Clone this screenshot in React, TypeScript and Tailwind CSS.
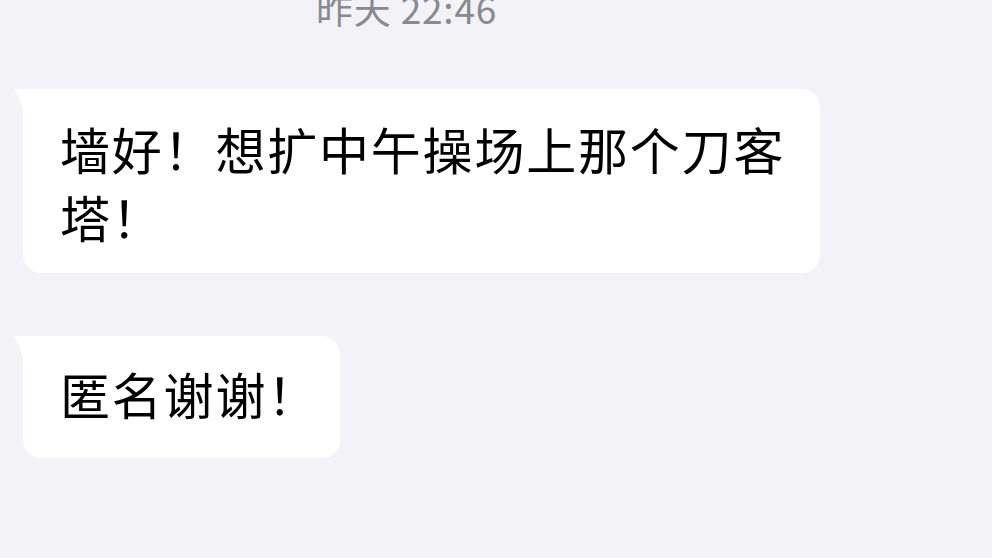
import React from "react";

const Tail = () => (
  <svg
    className="absolute -left-[9px] top-0"
    width="10"
    height="26"
    viewBox="0 0 10 26"
    aria-hidden="true"
  >
    <path d="M10 0 H0 Q6 9 10 26 Z" fill="#ffffff" />
  </svg>
);

const Bubble = ({
  text,
  className,
}: {
  text: string;
  className: string;
}) => (
  <div
    className={`relative ml-[23px] bg-white rounded-[18px] rounded-tl-none pl-[37px] pr-[28px] text-[50px] tracking-[1.8px] leading-[68px] text-black ${className}`}
  >
    <Tail />
    {text}
  </div>
);

export default function App() {
  return (
    <div
      className="min-h-screen w-full bg-[#f2f2f7] overflow-hidden flex flex-col"
      style={{ fontFamily: '"Noto Sans CJK SC", "Noto Sans", sans-serif' }}
    >
      <div className="-mt-[12px] pl-[316px] text-[37px] leading-[40px] text-[#8a8a8e] tracking-[0.8px]">
        昨天 22:46
      </div>

      <Bubble
        text="墙好！想扩中午操场上那个刀客塔！"
        className="mt-[61px] w-[797px] pt-[25px] pb-[23px]"
      />

      <Bubble
        text="匿名谢谢！"
        className="mt-[63px] w-[317px] pt-[23px] pb-[31px] whitespace-nowrap"
      />
    </div>
  );
}
